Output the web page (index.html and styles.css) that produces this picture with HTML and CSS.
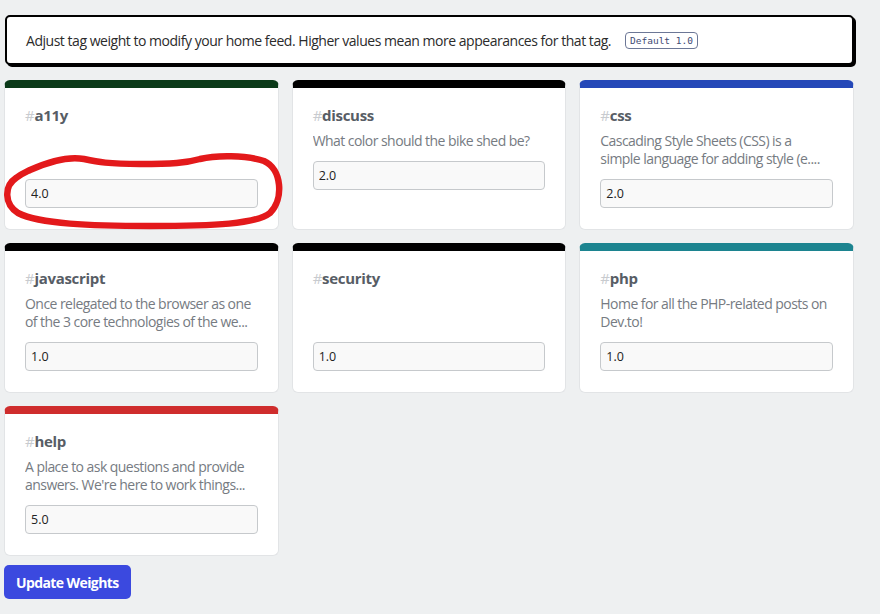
FILE: index.html
```html
<!DOCTYPE html>
<html lang="en">
<head>
  <meta charset="UTF-8" />
  <meta name="viewport" content="width=device-width, initial-scale=1.0" />
  <title>Tag weights</title>
  <link rel="stylesheet" href="styles.css">
</head>
<body>
  <div class="page">
    <div class="notice">
      Adjust tag weight to modify your home feed. Higher values mean more appearances for that tag.
      <span class="badge">Default 1.0</span>
    </div>

    <div class="tags">
      <div class="tag" style="border-top-color:#0b3a19;">
        <h3><span class="hash">#</span>a11y</h3>
        <input class="weight" value="4.0" />
      </div>
      <div class="tag" style="border-top-color:#000000;">
        <h3><span class="hash">#</span>discuss</h3>
        <p>What color should the bike shed be?</p>
        <input class="weight" value="2.0" />
      </div>
      <div class="tag" style="border-top-color:#2548b8;">
        <h3><span class="hash">#</span>css</h3>
        <p>Cascading Style Sheets (CSS) is a simple language for adding style (e....</p>
        <input class="weight" value="2.0" />
      </div>
      <div class="tag" style="border-top-color:#000000;">
        <h3><span class="hash">#</span>javascript</h3>
        <p>Once relegated to the browser as one of the 3 core technologies of the we...</p>
        <input class="weight" value="1.0" />
      </div>
      <div class="tag" style="border-top-color:#000000;">
        <h3><span class="hash">#</span>security</h3>
        <input class="weight" value="1.0" />
      </div>
      <div class="tag" style="border-top-color:#1c8490;">
        <h3><span class="hash">#</span>php</h3>
        <p>Home for all the PHP-related posts on Dev.to!</p>
        <input class="weight" value="1.0" />
      </div>
      <div class="tag" style="border-top-color:#cf2d2d;">
        <h3><span class="hash">#</span>help</h3>
        <p>A place to ask questions and provide answers. We're here to work things...</p>
        <input class="weight" value="5.0" />
      </div>
    </div>

    <button class="update">Update Weights</button>

    <!-- hand drawn marker around the a11y field -->
    <svg class="scribble" width="880" height="614" viewBox="0 0 880 614">
      <path d="M 30 170 C 50 161, 68 156, 84 159 C 98 162, 108 164, 140 164 C 172 164, 186 163, 200 159 C 216 155, 246 155, 264 161 C 282 169, 284 199, 270 213 C 256 224, 215 226, 150 226 C 90 226, 40 224, 18 213 C 4 204, 4 186, 16 178 C 21 174, 26 172, 30 170 Z"
            fill="none" stroke="#e3191b" stroke-width="6.5" stroke-linejoin="round" />
    </svg>
  </div>
</body>
</html>
```

FILE: styles.css
```css
body {
  margin: 0;
  padding: 0;
  background: #eef0f1;
  font-family: 'Open Sans', 'Noto Sans', sans-serif;
  color: #333;
}
.page {
  position: relative;
  width: 850px;
  padding: 15px 0 0 4px;
}
.notice {
  margin-left: 1px;
  background: white;
  border: 2px solid #000;
  border-radius: 5px;
  box-shadow: 2px 2px 0 #000;
  height: 46px;
  padding: 0 19px;
  display: flex;
  align-items: center;
  font-size: 14px;
  color: #2b2b2b;
  letter-spacing: -0.47px;
}
.badge {
  margin-left: 14px;
  font-family: 'DejaVu Sans Mono', monospace;
  font-size: 9.5px;
  letter-spacing: 0;
  color: #3e4a73;
  border: 1px solid #6c7796;
  border-radius: 4px;
  padding: 2px 4px;
}
.tags {
  margin-top: 15px;
  display: grid;
  grid-template-columns: repeat(3, 1fr);
  gap: 13px;
}
.tag {
  background: white;
  border: 1px solid #e2e4e6;
  border-top: 8px solid #000;
  border-radius: 6px;
  padding: 15px 20px 21px;
  display: flex;
  flex-direction: column;
}
.tag h3 {
  margin: 0 0 5px;
  font-size: 15px;
  line-height: 24px;
  font-weight: 700;
  color: #575d65;
  letter-spacing: -0.3px;
}
.hash {
  color: #c8cbcf;
  font-weight: 400;
}
.tag p {
  margin: 0;
  font-size: 14px;
  line-height: 18px;
  color: #767b82;
  letter-spacing: -0.55px;
  display: -webkit-box;
  -webkit-line-clamp: 2;
  -webkit-box-orient: vertical;
  overflow: hidden;
}
.weight {
  margin-top: auto;
  box-sizing: border-box;
  width: 100%;
  height: 29px;
  padding: 0 5px;
  font-family: 'Open Sans', sans-serif;
  font-size: 12.5px;
  color: #222;
  background: #f9f9f9;
  border: 1px solid #c6c9cc;
  border-radius: 4px;
}
.tag p + .weight {
  margin-top: 11px;
}
.tag h3 + .weight {
  margin-top: 47px;
}
.update {
  margin-top: 9px;
  height: 34px;
  padding: 0 12px;
  background: #3b49df;
  color: white;
  border: none;
  border-radius: 5px;
  font-family: 'Open Sans', sans-serif;
  font-size: 14px;
  font-weight: 700;
  letter-spacing: -0.6px;
  cursor: pointer;
}
.scribble {
  position: absolute;
  left: 0;
  top: 0;
  pointer-events: none;
}
```
